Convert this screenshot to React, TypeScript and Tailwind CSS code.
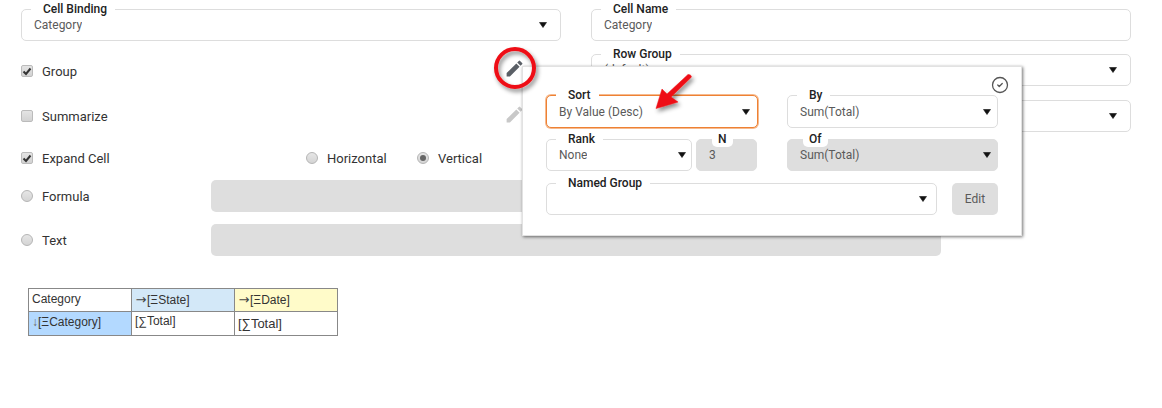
import type { ReactNode } from "react";
import { CircleCheck } from "lucide-react";
import { MdEdit } from "react-icons/md";

function Caret() {
  return (
    <svg width="8" height="6" viewBox="0 0 8 6" className="shrink-0">
      <path d="M0.5 0.5H7.5L4 5.5Z" fill="#111" stroke="#111" strokeWidth="0.6" strokeLinejoin="round" />
    </svg>
  );
}

type FieldProps = {
  label?: string;
  value?: string;
  caret?: boolean;
  disabled?: boolean;
  focused?: boolean;
  labelClass?: string;
  padClass?: string;
  className?: string;
};

// box with the label sitting in a notch of the top border
function Field({
  label,
  value,
  caret,
  disabled,
  focused,
  labelClass = "left-[9px] pl-3 pr-2",
  padClass = "pr-[13px]",
  className = "",
}: FieldProps) {
  const tone = disabled
    ? "bg-[#dedede] border-[#dedede]"
    : focused
      ? "bg-white border-[#ee8133] shadow-[0_0_0_1px_rgba(238,129,51,0.55)]"
      : "bg-white border-[#dddddd]";
  return (
    <div className={`relative flex h-8 items-center justify-between rounded-[5px] border pl-3 ${padClass} ${tone} ${className}`}>
      <span className="truncate text-[12px] text-[#5a5a5a]">{value}</span>
      {caret && <Caret />}
      {label && (
        <span className={`absolute top-[-8px] h-[15px] bg-white text-[12px] leading-[15px] font-medium text-[#222] ${labelClass}`}>
          {label}
        </span>
      )}
    </div>
  );
}

function Check({ on }: { on?: boolean }) {
  return (
    <span className="flex h-3 w-3 shrink-0 items-center justify-center rounded-[2px] border border-[#bbbbbb] bg-gradient-to-b from-[#e4e4e4] to-[#d2d2d2]">
      {on && (
        <svg width="10" height="9" viewBox="0 0 10 9">
          <path d="M1.5 4.5L4 7L8.5 1.5" fill="none" stroke="#333" strokeWidth="2" />
        </svg>
      )}
    </span>
  );
}

function Radio({ on }: { on?: boolean }) {
  return (
    <span className="flex h-3 w-3 shrink-0 items-center justify-center rounded-full border border-[#b5b5b5] bg-gradient-to-b from-[#e6e6e6] to-[#d4d4d4]">
      {on && <span className="h-[6px] w-[6px] rounded-full bg-[#666]" />}
    </span>
  );
}

function Option({ control, children, className = "" }: { control: ReactNode; children: ReactNode; className?: string }) {
  return (
    <div className={`flex items-center gap-[9px] text-[13px] text-[#333] ${className}`}>
      {control}
      <span className="pt-[2px]">{children}</span>
    </div>
  );
}

function SortPopup() {
  const notch = "left-[15px] rounded-b-[5px] px-[6px]";
  return (
    <div className="absolute top-[66px] left-[522px] flex h-[170px] w-[500px] flex-col gap-[11px] border border-[#e2e2e2] bg-white pt-[28px] pl-[23px] shadow-[1px_1px_3px_rgba(0,0,0,0.55)]">
      <CircleCheck size={18} strokeWidth={1.7} color="#555" className="absolute top-[9px] right-[12px]" />
      <div className="flex gap-[29px]">
        <Field label="Sort" value="By Value (Desc)" caret focused padClass="pr-[7px]" className="h-[33px] w-[212px]" />
        <Field label="By" value="Sum(Total)" caret padClass="pr-[6px]" className="h-[33px] w-[211px]" />
      </div>
      <div className="flex gap-[30px]">
        <div className="flex w-[211px] gap-1">
          <Field label="Rank" value="None" caret padClass="pr-[5px]" className="w-[146px]" />
          <Field label="N" value="3" disabled labelClass={notch} className="w-[61px]" />
        </div>
        <Field label="Of" value="Sum(Total)" caret disabled padClass="pr-[6px]" labelClass={notch} className="w-[211px]" />
      </div>
      <div className="mt-px flex gap-[15px]">
        <Field label="Named Group" caret padClass="pr-[9px]" className="w-[391px]" />
        <div className="flex h-8 w-[46px] items-center justify-center rounded-[5px] bg-[#dedede] text-[12px] text-[#5a5a5a]">Edit</div>
      </div>
    </div>
  );
}

// red callouts painted on top of the screenshot
function Callouts() {
  return (
    <svg className="pointer-events-none absolute top-0 left-0" width="1162" height="408">
      <defs>
        <filter id="callout-shadow" x="-30%" y="-30%" width="170%" height="170%">
          <feDropShadow dx="2" dy="3" stdDeviation="2" floodColor="#000" floodOpacity="0.45" />
        </filter>
      </defs>
      <circle cx="515" cy="68" r="19" fill="none" stroke="#ee0d14" strokeWidth="4" filter="url(#callout-shadow)" />
      <path
        d="M688 74.5Q691 74 691.5 77L671 97L678 102L656 108.5L662 89L667 94Z"
        fill="#ee0d14"
        stroke="#ee0d14"
        strokeWidth="0.5"
        strokeLinejoin="round"
        filter="url(#callout-shadow)"
      />
    </svg>
  );
}

function BindingTable() {
  const cell = "border border-[#888888] px-[3px] align-middle";
  const rightArrow = (
    <span className="inline-flex w-3 justify-center font-['DejaVu_Sans',sans-serif] text-[13px] leading-none text-[#444]">→</span>
  );
  return (
    <table className="ml-7 mt-8 w-[310px] table-fixed border-collapse font-['Liberation_Sans',Arial,sans-serif] text-[12px] text-[#333]">
      <tbody>
        <tr className="h-[23px]">
          <td className={`${cell} w-[103px] pb-[2px]`}>Category</td>
          <td className={`${cell} w-[103px] bg-[#d3e8f8]`}>{rightArrow}[ΞState]</td>
          <td className={`${cell} bg-[#fffbc9]`}>{rightArrow}[ΞDate]</td>
        </tr>
        <tr className="h-[23px]">
          <td className={`${cell} bg-[#b3d9ff] pb-[3px]`}>
            <span className="text-[#666]">↓</span>[ΞCategory]
          </td>
          <td className={`${cell} pb-[5px]`}>[∑Total]</td>
          <td className={`${cell} text-[13px]`}>[∑Total]</td>
        </tr>
      </tbody>
    </table>
  );
}

export default function App() {
  return (
    <div className="relative h-[408px] w-[1162px] overflow-hidden bg-white font-['Roboto',sans-serif]">
      <div className="flex gap-[30px] pt-[9px] pl-[21px]">
        <div className="flex w-[540px] flex-col">
          <Field label="Cell Binding" value="Category" caret />
          <div className="mt-[18px] flex h-6 items-center justify-between pr-[36px]">
            <Option control={<Check on />}>Group</Option>
            <MdEdit size={21} color="#5a5f66" className="mb-[5px]" />
          </div>
          <div className="mt-[21px] flex h-6 items-center justify-between pr-[36px]">
            <Option control={<Check />}>Summarize</Option>
            <MdEdit size={21} color="#c8c8c8" className="mb-[3px]" />
          </div>
        </div>
        <div className="flex w-[540px] flex-col">
          <Field label="Cell Name" value="Category" />
          <Field label="Row Group" value="(default)" caret className="mt-[13px]" />
          <Field caret className="mt-[14px]" />
        </div>
      </div>

      <div className="ml-[21px] mt-[14px] flex h-6 items-center">
        <Option control={<Check on />} className="w-[285px]">Expand Cell</Option>
        <Option control={<Radio />} className="w-[111px]">Horizontal</Option>
        <Option control={<Radio on />}>Vertical</Option>
      </div>

      <div className="ml-[21px] mt-[10px] flex w-[920px] flex-col gap-3">
        <div className="flex items-center">
          <Option control={<Radio />} className="w-[190px]">Formula</Option>
          <div className="h-8 flex-1 rounded-[5px] bg-[#dedede]" />
        </div>
        <div className="flex items-center">
          <Option control={<Radio />} className="w-[190px]">Text</Option>
          <div className="h-8 flex-1 rounded-[5px] bg-[#dedede]" />
        </div>
      </div>

      <BindingTable />
      <SortPopup />
      <Callouts />
    </div>
  );
}
